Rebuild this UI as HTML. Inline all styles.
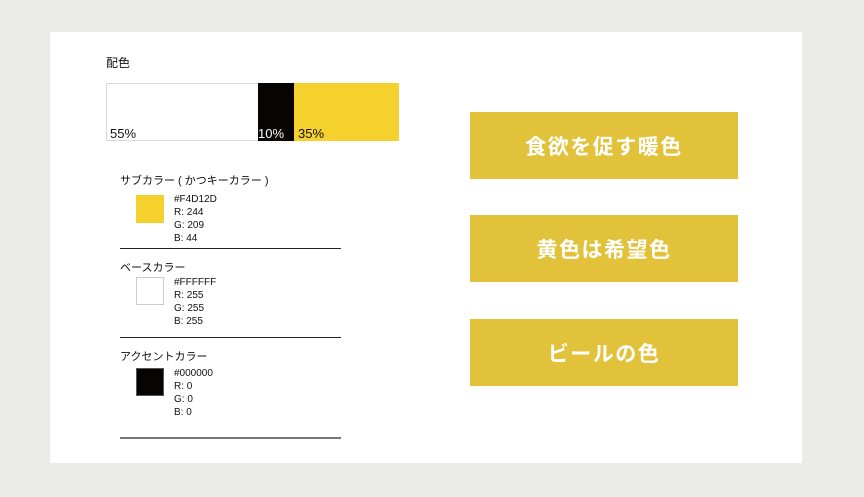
<!DOCTYPE html>
<html><head><meta charset="utf-8"><style>
*{margin:0;padding:0;box-sizing:border-box}
body{width:864px;height:497px;background:#ebebe9;position:relative;overflow:hidden;font-family:"Liberation Sans","Noto Sans CJK JP",sans-serif;color:#111}
.card{position:absolute;left:50px;top:32px;width:752px;height:431px;background:#fff}
.a{position:absolute}
.t{font-size:11px;line-height:13px;white-space:nowrap}
.s{font-size:10px;line-height:13px;white-space:nowrap}
.ln{position:absolute;left:120px;width:221px;height:1px;background:#222}
.btn{position:absolute;left:470px;width:268px;height:67px;background:#e2c23a;color:#fff;font-size:21px;font-weight:bold;display:flex;align-items:center;justify-content:center;letter-spacing:1.5px}
</style></head><body>
<div class="card"></div>
<div class="a" style="left:106px;top:54px;font-size:12px">配色</div>
<div class="a" style="left:106px;top:83px;width:152px;height:58px;border:1px solid #d8d8d8;border-right:none"></div>
<div class="a" style="left:258px;top:83px;width:36px;height:58px;background:#070403"></div>
<div class="a" style="left:294px;top:83px;width:105px;height:58px;background:#f4d12d"></div>
<div class="a" style="left:110px;top:126px;font-size:13px">55%</div>
<div class="a" style="left:258px;top:126px;font-size:13px;color:#fff">10%</div>
<div class="a" style="left:298px;top:126px;font-size:13px">35%</div>

<div class="a t" style="left:120px;top:175px">サブカラー ( かつキーカラー )</div>
<div class="a" style="left:136px;top:195px;width:28px;height:28px;background:#f4d12d"></div>
<div class="a s" style="left:174px;top:193px">#F4D12D<br>R: 244<br>G: 209<br>B: 44</div>
<div class="ln" style="top:248px"></div>

<div class="a t" style="left:120px;top:262px">ベースカラー</div>
<div class="a" style="left:136px;top:277px;width:28px;height:28px;border:1px solid #ccc"></div>
<div class="a s" style="left:174px;top:276px">#FFFFFF<br>R: 255<br>G: 255<br>B: 255</div>
<div class="ln" style="top:337px"></div>

<div class="a t" style="left:120px;top:351px">アクセントカラー</div>
<div class="a" style="left:136px;top:368px;width:28px;height:28px;background:#070403;border:1px solid #555"></div>
<div class="a s" style="left:174px;top:367px">#000000<br>R: 0<br>G: 0<br>B: 0</div>
<div class="ln" style="top:437px;background:#777;height:2px"></div>

<div class="btn" style="top:112px">食欲を促す暖色</div>
<div class="btn" style="top:215px">黄色は希望色</div>
<div class="btn" style="top:319px">ビールの色</div>
</body></html>
